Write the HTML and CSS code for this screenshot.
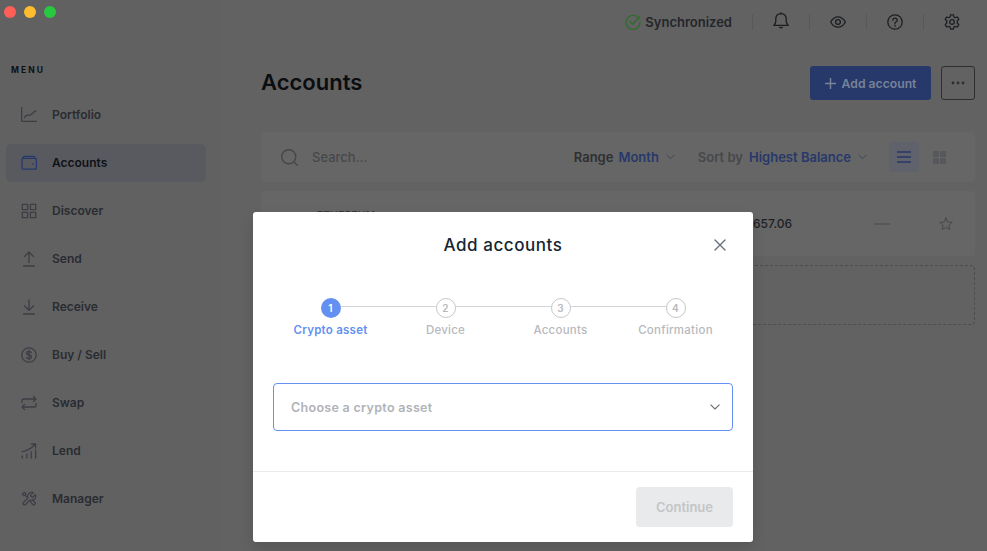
FILE: index.html
```html
<html>
  <head>
    <link rel="stylesheet" href="styles.css">
  </head>
  <body class="body">
    <div class="App">
      <aside class="Sidebar">
        <div class="Lights">
          <span class="Light Light--red"></span>
          <span class="Light Light--yellow"></span>
          <span class="Light Light--green"></span>
        </div>
        <div class="Sidebar-title">MENU</div>
        <nav class="Nav">
          <a class="Nav-item" href="#">
            <svg class="Nav-icon" viewBox="0 0 16 16"><path d="M.6 .5V13.2Q.6 14.4 1.8 14.4H15.4M3.6 10.6Q5 7.4 6.8 8.2T10 7.4L14.8 3.8"/></svg>
            <span>Portfolio</span>
          </a>
          <a class="Nav-item Nav-item--active" href="#">
            <svg class="Nav-icon" viewBox="0 0 16 16"><path d="M1.6 3.8Q1.8 1.3 4 1.3H12.4Q13.8 1.3 14 3.2M1 4.6Q1 3.4 2.4 3.4H14Q15.4 3.4 15.4 4.8V12.8Q15.4 14.2 14 14.2H2.4Q1 14.2 1 12.8ZM11.4 8.9H12.2"/></svg>
            <span>Accounts</span>
          </a>
          <a class="Nav-item" href="#">
            <svg class="Nav-icon" viewBox="0 0 16 16"><path d="M1.3 1.3H6.6V6.6H1.3ZM9.4 1.3H14.7V6.6H9.4ZM1.3 9.4H6.6V14.7H1.3ZM9.4 9.4H14.7V14.7H9.4Z"/></svg>
            <span>Discover</span>
          </a>
          <a class="Nav-item" href="#">
            <svg class="Nav-icon" viewBox="0 0 16 16"><path d="M8 11.6V1M3.4 5.6 8 1 12.6 5.6M2.6 15H13.4"/></svg>
            <span>Send</span>
          </a>
          <a class="Nav-item" href="#">
            <svg class="Nav-icon" viewBox="0 0 16 16"><path d="M8 1V11.4M3.4 6.8 8 11.4 12.6 6.8M2.6 15H13.4"/></svg>
            <span>Receive</span>
          </a>
          <a class="Nav-item" href="#">
            <svg class="Nav-icon" viewBox="0 0 16 16"><circle cx="8" cy="8" r="7.2"/><path d="M10.4 5.6Q9.8 4.4 8 4.4 5.7 4.4 5.7 6.1T8 8 10.4 10 8 11.6 5.5 10.3M8 3.2V12.8"/></svg>
            <span>Buy / Sell</span>
          </a>
          <a class="Nav-item" href="#">
            <svg class="Nav-icon" viewBox="0 0 16 16"><path d="M1 7.6V5.6Q1 4 2.6 4H15M12.4 1.4 15 4 12.4 6.6M15 8.4V10.4Q15 12 13.4 12H1M3.6 9.4 1 12 3.6 14.6"/></svg>
            <span>Swap</span>
          </a>
          <a class="Nav-item" href="#">
            <svg class="Nav-icon" viewBox="0 0 16 16"><path d="M1 8.6Q8 7.6 14.4 1.2M10.6 1H14.6V5M1.2 13V15M5.8 11V15M10.2 8.6V15M14.6 7V15"/></svg>
            <span>Lend</span>
          </a>
          <a class="Nav-item" href="#">
            <svg class="Nav-icon Nav-icon--tools" viewBox="0 0 24 24"><path d="M14.7 6.3a1 1 0 0 0 0 1.4l1.6 1.6a1 1 0 0 0 1.4 0l3.8-3.8a6 6 0 0 1-7.9 7.9l-6.9 6.9a2.1 2.1 0 0 1-3-3l6.9-6.9a6 6 0 0 1 7.9-7.9z"/><path d="M8.4 8.8 6.2 6.6 7.6 4.2 5 1.8 2 4.6 4.4 7.2 6.4 6.2M13.8 15.4 17.6 20a2.2 2.2 0 0 0 3.4-2.8L17.4 13.4"/></svg>
            <span>Manager</span>
          </a>
        </nav>
      </aside>

      <main class="Main">
        <header class="TopBar">
          <div class="Sync">
            <svg class="Sync-icon" viewBox="0 0 16 16"><path d="M14 4.8A7 7 0 1 0 15 8M4.8 7.4 7.6 10.2 14.6 2.8"/></svg>
            <span>Synchronized</span>
          </div>
          <div class="TopBar-cell">
            <svg class="TopBar-icon" viewBox="0 1.5 16 16"><path d="M.8 12.8Q2.6 11.4 2.8 8.6V6Q3 1.4 8 1.2 13 1.4 13.2 6V8.6Q13.4 11.4 15.2 12.8ZM6.6 14.8Q8 16 9.4 14.8M8 .2V1.2"/></svg>
          </div>
          <div class="TopBar-cell">
            <svg class="TopBar-icon" viewBox="0 0 16 16"><path d="M.6 8Q3.6 2.8 8 2.8T15.4 8Q12.4 13.2 8 13.2T.6 8Z"/><circle cx="8" cy="8" r="2.4"/></svg>
          </div>
          <div class="TopBar-cell">
            <svg class="TopBar-icon" viewBox="0 0 16 16"><circle cx="8" cy="8" r="7.2"/><path d="M5.8 6.2Q6 4.2 8 4.2T10.2 6.2Q10.2 7.4 8.8 8 8 8.4 8 9.6M8 11.2V12.2"/></svg>
          </div>
          <div class="TopBar-cell">
            <svg class="TopBar-icon" viewBox="0 0 16 16"><path d="M6.6 .8H9.4L9.9 3 11.2 3.7 13.4 3 14.8 5.4 13.2 7V9L14.8 10.6 13.4 13 11.2 12.3 9.9 13 9.4 15.2H6.6L6.1 13 4.8 12.3 2.6 13 1.2 10.6 2.8 9V7L1.2 5.4 2.6 3 4.8 3.7 6.1 3Z"/><circle cx="8" cy="8" r="2.3"/></svg>
          </div>
        </header>

        <div class="PageHead">
          <h1 class="PageHead-title">Accounts</h1>
          <button class="AddBtn">
            <svg class="AddBtn-icon" viewBox="0 0 12 12"><path d="M6 .5V11.5M.5 6H11.5"/></svg>
            Add account
          </button>
          <button class="MoreBtn">
            <svg class="MoreBtn-icon" viewBox="0 0 14 4"><circle cx="2" cy="2" r="1.4"/><circle cx="7" cy="2" r="1.4"/><circle cx="12" cy="2" r="1.4"/></svg>
          </button>
        </div>

        <section class="Card Filters">
          <svg class="Filters-search" viewBox="0 0 16 16"><circle cx="7.3" cy="7.3" r="6.6"/><path d="M12 12 15.4 15.4"/></svg>
          <span class="Filters-placeholder">Search...</span>
          <span class="Filters-label Filters-label--dark">Range</span>
          <span class="Filters-value">Month</span>
          <svg class="Chevron Chevron--range" viewBox="0 0 10 6"><path d="M1 1 5 5 9 1"/></svg>
          <span class="Filters-label Filters-label--sort">Sort by</span>
          <span class="Filters-value">Highest Balance</span>
          <svg class="Chevron Chevron--sort" viewBox="0 0 10 6"><path d="M1 1 5 5 9 1"/></svg>
          <div class="ListBtn">
            <svg class="ListBtn-icon" viewBox="0 0 14 12"><path d="M0 1H14M0 6H14M0 11H14"/></svg>
          </div>
          <div class="GridBtn">
            <span></span><span></span><span></span><span></span>
          </div>
        </section>

        <section class="Card Row">
          <span class="Row-name">ETHEREUM</span>
          <span class="Row-amount">$1,657.06</span>
          <span class="Row-dash"></span>
          <svg class="Row-star" viewBox="0 0 14 14"><path d="M7 .9 8.8 5 13.2 5.4 9.9 8.3 10.9 12.7 7 10.4 3.1 12.7 4.1 8.3 .8 5.4 5.2 5Z"/></svg>
        </section>

        <section class="AddRow"></section>
      </main>
    </div>

    <div class="Modal">
      <div class="Modal-head">
        <h2 class="Modal-title">Add accounts</h2>
        <svg class="Modal-close" viewBox="0 0 12 12"><path d="M1 1 11 11M11 1 1 11"/></svg>
      </div>
      <ol class="Steps">
        <li class="Step Step--active"><span class="Step-dot">1</span><span class="Step-label">Crypto asset</span></li>
        <li class="Step"><span class="Step-dot">2</span><span class="Step-label">Device</span></li>
        <li class="Step"><span class="Step-dot">3</span><span class="Step-label">Accounts</span></li>
        <li class="Step"><span class="Step-dot">4</span><span class="Step-label">Confirmation</span></li>
      </ol>
      <div class="Select">
        <span>Choose a crypto asset</span>
        <svg class="Select-chevron" viewBox="0 0 10 6"><path d="M.8 .8 5 5 9.2 .8"/></svg>
      </div>
      <div class="Modal-foot">
        <button class="ContinueBtn" disabled>Continue</button>
      </div>
    </div>
  </body>
</html>
```

FILE: styles.css
```css
html, body {
  padding: 0;
  margin: 0;
  width: 987px;
  height: 551px;
  overflow: hidden;
  font-family: Inter, "Liberation Sans", sans-serif;
  background: #626262;
}
svg {
  display: block;
  fill: none;
  stroke-width: 1.3;
  stroke-linecap: round;
  stroke-linejoin: round;
}
button {
  font-family: inherit;
  padding: 0;
  border: none;
}

.App {
  display: flex;
  height: 551px;
}

/* sidebar */
.Sidebar {
  flex: 0 0 222px;
  box-sizing: border-box;
  padding: 6px 0 0 6px;
  background: #616161;
}
.Lights {
  display: flex;
  gap: 8px;
  margin-left: -2px;
}
.Light {
  width: 12px;
  height: 12px;
  border-radius: 50%;
}
.Light--red { background: #ff5f57; }
.Light--yellow { background: #febc2e; }
.Light--green { background: #28c840; }
.Sidebar-title {
  margin: 46px 0 0 5px;
  font-size: 8.5px;
  line-height: 12px;
  font-weight: 700;
  letter-spacing: 2.1px;
  color: #0e1014;
}
.Nav {
  display: flex;
  flex-direction: column;
  gap: 10px;
  margin-top: 20px;
}
.Nav-item {
  display: flex;
  align-items: center;
  width: 200px;
  height: 38px;
  box-sizing: border-box;
  padding-left: 15px;
  border-radius: 5px;
  font-size: 12px;
  font-weight: 600;
  text-decoration: none;
  color: #2a2c32;
}
.Nav-item span {
  margin-top: -2px;
}
.Nav-item--active {
  background: #585a60;
  color: #101216;
}
.Nav-icon {
  width: 16px;
  height: 16px;
  margin-right: 15px;
  stroke: #3c3e44;
}
.Nav-icon--tools {
  stroke-width: 1.8;
}
.Nav-item--active .Nav-icon {
  stroke: #27396a;
}

/* main column */
.Main {
  flex: 1;
  display: flex;
  flex-direction: column;
  padding: 0 12px 0 39px;
  min-width: 0;
}
.TopBar {
  display: flex;
  align-items: center;
  justify-content: flex-end;
  height: 44px;
  margin-right: -5px;
}
.Sync {
  display: flex;
  align-items: center;
  gap: 4px;
  padding-right: 20px;
  font-size: 13px;
  font-weight: 600;
  color: #24262b;
}
.Sync-icon {
  width: 16px;
  height: 16px;
  stroke: #2f6d2a;
}
.TopBar-cell {
  display: flex;
  justify-content: center;
  align-items: center;
  width: 56px;
  height: 16px;
  border-left: 1px solid #57585a;
}
.TopBar-icon {
  width: 16px;
  height: 16px;
  overflow: visible;
  stroke: #1c1e22;
}
.PageHead {
  display: flex;
  align-items: center;
  margin-top: 22px;
  height: 34px;
}
.PageHead-title {
  flex: 1;
  margin: 0;
  padding-bottom: 2px;
  font-size: 22px;
  font-weight: 600;
  color: #0b0d11;
}
.AddBtn {
  display: flex;
  align-items: center;
  justify-content: center;
  gap: 6px;
  width: 121px;
  height: 34px;
  border-radius: 3px;
  background: #27396a;
  font-size: 12.2px;
  font-weight: 600;
  color: #788299;
}
.AddBtn-icon {
  width: 11px;
  height: 11px;
  stroke: #788299;
  stroke-width: 1.6;
}
.MoreBtn {
  display: flex;
  align-items: center;
  justify-content: center;
  width: 34px;
  height: 34px;
  box-sizing: border-box;
  margin-left: 10px;
  border: 1px solid #2d2e31;
  border-radius: 3px;
  background: none;
}
.MoreBtn-icon {
  width: 14px;
  height: 4px;
  fill: #2d2e31;
  stroke: none;
}

.Card {
  display: flex;
  align-items: center;
  background: #666666;
  border-radius: 4px;
}
.Filters {
  height: 50px;
  margin-top: 32px;
  font-size: 13px;
  font-weight: 600;
}
.Filters-search {
  width: 17px;
  height: 17px;
  margin-left: 20px;
  stroke: #46474a;
}
.Filters-placeholder {
  flex: 1;
  margin-left: 14px;
  font-weight: 500;
  color: #47484b;
}
.Filters-label {
  margin-right: 5px;
  color: #47484b;
}
.Filters-label--dark {
  color: #2e2f33;
}
.Filters-label--sort {
  margin-right: 6px;
}
.Filters-value {
  color: #27396a;
}
.Chevron {
  width: 9px;
  height: 6px;
  stroke: #3f4758;
  stroke-width: 1.1;
}
.Chevron--range { margin: 0 23px 0 7px; }
.Chevron--sort { margin: 0 22px 0 7px; }
.ListBtn {
  display: flex;
  align-items: center;
  justify-content: center;
  width: 30px;
  height: 30px;
  border-radius: 4px;
  background: #5f626b;
}
.ListBtn-icon {
  width: 14px;
  height: 12px;
  stroke: #27396a;
  stroke-width: 1.6;
  stroke-linecap: butt;
}
.GridBtn {
  display: grid;
  grid-template-columns: 6px 6px;
  gap: 1px;
  margin: 0 29px 0 14px;
}
.GridBtn span {
  height: 6px;
  background: #57585b;
}
.Row {
  position: relative;
  height: 65px;
  margin-top: 9px;
  font-size: 12px;
}
.Row-name {
  margin-left: 56px;
  margin-top: -18px;
  width: 420px;
  font-size: 10px;
  font-weight: 500;
  letter-spacing: .4px;
  color: #333437;
}
.Row-amount {
  width: 54px;
  text-align: right;
  font-weight: 500;
  color: #1f2024;
}
.Row-dash {
  width: 16px;
  height: 2px;
  margin-left: 83px;
  background: #565759;
}
.Row-star {
  width: 14px;
  height: 14px;
  margin-left: 49px;
  stroke: #47484b;
  stroke-width: 1;
}
.AddRow {
  height: 60px;
  margin-top: 9px;
  box-sizing: border-box;
  border: 1px dashed #4c4d50;
  border-radius: 4px;
}

/* modal */
.Modal {
  position: absolute;
  left: 253px;
  top: 212px;
  width: 500px;
  height: 330px;
  display: flex;
  flex-direction: column;
  background: #fff;
  border-radius: 3px;
  box-shadow: 0 6px 14px rgba(0, 0, 0, .12);
}
.Modal-head {
  position: relative;
  flex: 0 0 auto;
  padding-top: 22px;
  text-align: center;
}
.Modal-title {
  margin: 0;
  font-size: 17px;
  line-height: 22px;
  font-weight: 500;
  letter-spacing: .55px;
  color: #142533;
}
.Modal-close {
  position: absolute;
  top: 27px;
  right: 27px;
  width: 12px;
  height: 12px;
  stroke: #67707c;
  stroke-width: 1.4;
}
.Steps {
  display: grid;
  grid-template-columns: repeat(4, 115px);
  justify-content: center;
  margin: 42px 0 0;
  padding: 0;
  list-style: none;
}
.Step {
  position: relative;
  display: flex;
  flex-direction: column;
  align-items: center;
  gap: 5px;
  font-size: 11.5px;
  line-height: 14px;
  font-weight: 500;
  letter-spacing: .25px;
  color: #b6b9bd;
}
.Step + .Step::before {
  content: "";
  position: absolute;
  top: 8px;
  right: 67px;
  width: 95px;
  height: 1px;
  background: #d3d4d6;
}
.Step-dot {
  display: flex;
  align-items: center;
  justify-content: center;
  box-sizing: border-box;
  width: 20px;
  height: 20px;
  border: 1px solid #c6c7c9;
  border-radius: 50%;
  font-size: 10px;
  font-weight: 600;
}
.Step-label {
  white-space: nowrap;
}
.Step--active {
  font-weight: 600;
  color: #6490f1;
}
.Step--active .Step-dot {
  border: none;
  background: #6490f1;
  color: #fff;
}
.Select {
  display: flex;
  align-items: center;
  justify-content: space-between;
  box-sizing: border-box;
  height: 48px;
  margin: 46px 20px 0;
  padding: 0 12px 0 17px;
  border: 1px solid #6490f1;
  border-radius: 4px;
  font-size: 12.5px;
  font-weight: 600;
  letter-spacing: .3px;
  color: #b0b3b7;
}
.Select-chevron {
  width: 10px;
  height: 6px;
  stroke: #6c6f74;
  stroke-width: 1.1;
}
.Modal-foot {
  display: flex;
  justify-content: flex-end;
  margin-top: 40px;
  padding: 15px 20px;
  border-top: 1px solid #eaebec;
}
.ContinueBtn {
  width: 97px;
  height: 40px;
  border-radius: 4px;
  background: #e9eaeb;
  font-size: 13px;
  font-weight: 600;
  color: #c3c5c8;
}
```
